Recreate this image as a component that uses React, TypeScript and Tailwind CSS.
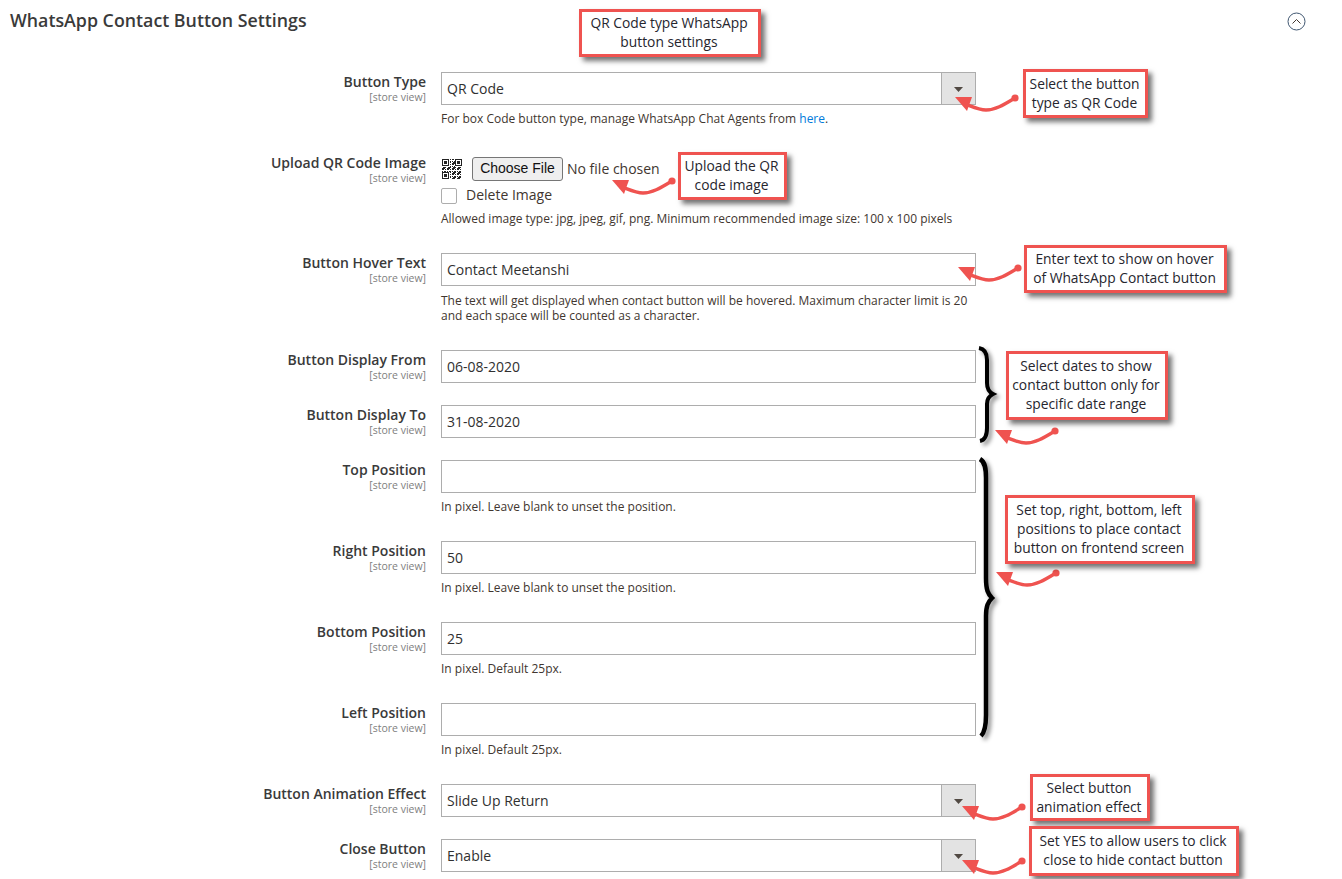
const labelFont = "font-['Open_Sans',sans-serif]"

// blurry little QR code: three finder squares, the rest is filler
function qrCell(x: number, y: number) {
  const finder = (fx: number, fy: number) => {
    const dx = x - fx
    const dy = y - fy
    if (dx < 0 || dy < 0 || dx > 7 || dy > 7) return null
    if (dx === 7 || dy === 7) return false
    if (dx === 0 || dy === 0 || dx === 6 || dy === 6) return true
    return dx >= 2 && dx <= 4 && dy >= 2 && dy <= 4
  }
  const f = finder(0, 0) ?? finder(13, 0) ?? finder(0, 13)
  if (f !== null) return f
  return (x * 7 + y * 13 + x * y * 3) % 5 < 3
}

function QrIcon() {
  const cells = Array.from({ length: 20 }, (_, y) => Array.from({ length: 20 }, (_, x) => ({ x, y })))
  return (
    <svg width="20" height="20" viewBox="0 0 20 20" className="shrink-0 ml-[1px] blur-[0.4px]">
      {cells.flat().map(({ x, y }) =>
        qrCell(x, y) ? <rect key={`${x}-${y}`} x={x} y={y} width="1" height="1" fill="#222" /> : null,
      )}
    </svg>
  )
}

function Label({ text, className }: { text: string; className?: string }) {
  return (
    <div className={`w-[426px] shrink-0 text-right ${className ?? ''}`}>
      <div className="text-[14px] leading-[19px] font-semibold text-[#3a3a3a]">{text}</div>
      <div className="text-[10.5px] leading-[12px] text-[#808080]">[store view]</div>
    </div>
  )
}

function Note({ className, children }: { className?: string; children: React.ReactNode }) {
  return <p className={`text-[12px] leading-[15px] text-[#41362f] ${className ?? 'mt-[6px]'}`}>{children}</p>
}

function TextBox({ value }: { value?: string }) {
  return (
    <div className="h-[33px] border border-[#adadad] bg-white px-[5px] flex items-center text-[14px] text-[#303030]">
      {value}
    </div>
  )
}

function SelectBox({ value }: { value: string }) {
  return (
    <div className="h-[33px] border border-[#adadad] bg-white flex items-stretch text-[14px] text-[#303030]">
      <div className="flex-1 px-[5px] flex items-center">{value}</div>
      <div className="w-[34px] border-l border-[#adadad] bg-[#e3e3e3] flex items-center justify-center">
        <svg width="9" height="5" viewBox="0 0 9 5" className="mt-[1px]">
          <path d="M0 0H9L4.5 5Z" fill="#514943" />
        </svg>
      </div>
    </div>
  )
}

function Row({ text, className, labelClass, children }: { text: string; className?: string; labelClass?: string; children: React.ReactNode }) {
  return (
    <div className={`flex gap-[15px] ${className ?? ''}`}>
      <Label text={text} className={labelClass} />
      <div className="w-[535px] shrink-0">{children}</div>
    </div>
  )
}

function Callout({ className, children }: { className: string; children: React.ReactNode }) {
  return (
    <div
      className={`absolute flex items-center justify-center border-[3px] border-[#ef5350] bg-white pb-[2px] pr-[2px] text-center text-[13.8px] leading-[19px] text-[#26262e] shadow-[4px_4px_5px_rgba(0,0,0,0.55)] ${className}`}
    >
      <div>{children}</div>
    </div>
  )
}

// dot is at left+64, top+6; tip is at left+4, top+6
function Arrow({ className }: { className: string }) {
  return (
    <svg width="70" height="24" viewBox="-64 -6 70 24" className={`absolute ${className}`}>
      <circle cx="0" cy="0" r="3.6" fill="#ef5350" />
      <path d="M0 0C-10 6-19 12-29 12C-36 12-42 9-50 6" fill="none" stroke="#ef5350" strokeWidth="3.4" />
      <path d="M-60 -1L-43 -1L-48 13Z" fill="#ef5350" />
    </svg>
  )
}

export default function App() {
  return (
    <div className={`relative w-[1342px] h-[879px] overflow-hidden bg-white ${labelFont}`}>
      <div className="flex items-start justify-between pl-[10px] pr-[36px] pt-[10px]">
        <h2 className="text-[17.8px] leading-[21px] font-semibold text-[#3a3a3a]">WhatsApp Contact Button Settings</h2>
        <svg width="19" height="19" viewBox="0 0 19 19" className="mt-[2px]">
          <circle cx="9.5" cy="9.5" r="8.5" fill="none" stroke="#3f5670" strokeWidth="1" />
          <path d="M5.5 11.5L9.5 7.5L13.5 11.5" fill="none" stroke="#41362f" strokeWidth="1" />
        </svg>
      </div>

      <div className="pt-[41px]">
        <Row text="Button Type">
          <SelectBox value="QR Code" />
          <Note>
            For box Code button type, manage WhatsApp Chat Agents from <span className="text-[#007bdb]">here</span>.
          </Note>
        </Row>

        <Row text="Upload QR Code Image" className="mt-[26px]" labelClass="pt-[1px]">
          <div className="h-[33px] flex items-center">
            <QrIcon />
            <span className="ml-[10px] h-[24px] w-[91px] shrink-0 rounded-[3px] border border-[#767676] bg-[#efefef] flex items-center justify-center font-['Liberation_Sans',sans-serif] text-[14px] text-[#111]">
              Choose File
            </span>
            <span className="ml-[4px] text-[14px] text-[#41362f]">No file chosen</span>
          </div>
          <div className="flex items-center h-[22px]">
            <span className="w-[16px] h-[16px] rounded-[2px] border border-[#adadad] bg-white shrink-0" />
            <span className="ml-[9px] mt-[-3px] text-[14px] text-[#41362f]">Delete Image</span>
          </div>
          <Note className="mt-[4px]">Allowed image type: jpg, jpeg, gif, png. Minimum recommended image size: 100 x 100 pixels</Note>
        </Row>

        <Row text="Button Hover Text" className="mt-[27px]">
          <TextBox value="Contact Meetanshi" />
          <Note className="mt-[7px]">
            The text will get displayed when contact button will be hovered. Maximum character limit is 20 and each
            space will be counted as a character.
          </Note>
        </Row>

        <Row text="Button Display From" className="mt-[27px]">
          <TextBox value="06-08-2020" />
        </Row>
        <Row text="Button Display To" className="mt-[22px]">
          <TextBox value="31-08-2020" />
        </Row>
        <Row text="Top Position" className="mt-[22px]">
          <TextBox />
          <Note>In pixel. Leave blank to unset the position.</Note>
        </Row>
        <Row text="Right Position" className="mt-[27px]">
          <TextBox value="50" />
          <Note>In pixel. Leave blank to unset the position.</Note>
        </Row>
        <Row text="Bottom Position" className="mt-[27px]">
          <TextBox value="25" />
          <Note>In pixel. Default 25px.</Note>
        </Row>
        <Row text="Left Position" className="mt-[27px]">
          <TextBox />
          <Note>In pixel. Default 25px.</Note>
        </Row>
        <Row text="Button Animation Effect" className="mt-[27px]">
          <SelectBox value="Slide Up Return" />
        </Row>
        <Row text="Close Button" className="mt-[22px]">
          <SelectBox value="Enable" />
        </Row>
      </div>

      {/* brackets drawn over the form */}
      <svg
        width="30"
        height="110"
        viewBox="970 340 30 110"
        className="absolute left-[970px] top-[340px] drop-shadow-[3px_3px_2px_rgba(0,0,0,0.45)]"
      >
        <path
          d="M979 348C985 349 987 353 987 360V383C987 389 989 392 993 394C989 396 987 399 987 404V428C987 436 985 440 980 441"
          fill="none"
          stroke="#000"
          strokeWidth="4"
        />
      </svg>
      <svg
        width="30"
        height="300"
        viewBox="970 450 30 300"
        className="absolute left-[970px] top-[450px] drop-shadow-[3px_3px_2px_rgba(0,0,0,0.45)]"
      >
        <path
          d="M980 459C985 462 986 468 986 478V578C986 590 988 594 992 598C988 602 986 606 986 616V715C986 726 985 732 981 736"
          fill="none"
          stroke="#000"
          strokeWidth="4.5"
        />
      </svg>

      <Arrow className="left-[951px] top-[92px]" />
      <Arrow className="left-[608px] top-[175px]" />
      <Arrow className="left-[954px] top-[262px]" />
      <Arrow className="left-[991px] top-[425px]" />
      <Arrow className="left-[992px] top-[567px]" />
      <Arrow className="left-[958px] top-[801px]" />
      <Arrow className="left-[958px] top-[855px]" />

      <Callout className="left-[579px] top-[9px] w-[182px] h-[48px]">
        QR Code type WhatsApp
        <br />
        button settings
      </Callout>
      <Callout className="left-[1023px] top-[69px] w-[125px] h-[49px]">
        Select the button
        <br />
        type as QR Code
      </Callout>
      <Callout className="left-[678px] top-[152px] w-[109px] h-[48px]">
        Upload the QR
        <br />
        code image
      </Callout>
      <Callout className="left-[1024px] top-[245px] w-[203px] h-[48px]">
        Enter text to show on hover
        <br />
        of WhatsApp Contact button
      </Callout>
      <Callout className="left-[1006px] top-[351px] w-[162px] h-[69px]">
        Select dates to show
        <br />
        contact button only for
        <br />
        specific date range
      </Callout>
      <Callout className="left-[1005px] top-[495px] w-[190px] h-[69px]">
        Set top, right, bottom, left
        <br />
        positions to place contact
        <br />
        button on frontend screen
      </Callout>
      <Callout className="left-[1030px] top-[774px] w-[120px] h-[47px]">
        Select button
        <br />
        animation effect
      </Callout>
      <Callout className="left-[1029px] top-[826px] w-[210px] h-[50px]">
        Set YES to allow users to click
        <br />
        close to hide contact button
      </Callout>
    </div>
  )
}
